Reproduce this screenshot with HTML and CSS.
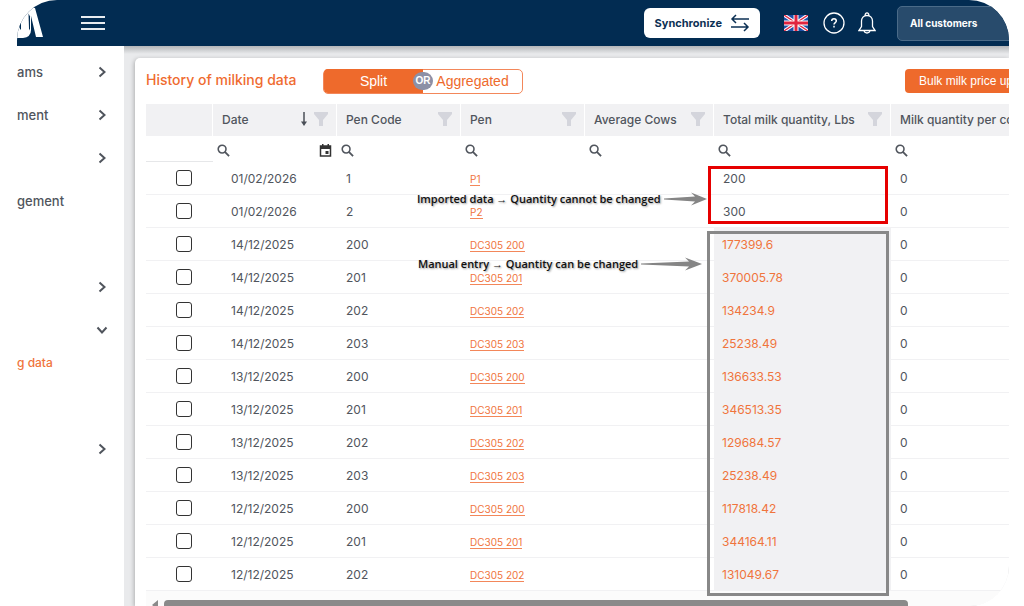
FILE: index.html
```
<!DOCTYPE html>
<html lang="en">
<head>
	<meta charset="utf-8">
	<title>History of milking data</title>
	<link rel="stylesheet" href="styles.css">
</head>
<body>
	<svg class="defs" aria-hidden="true">
		<symbol id="chevron" viewBox="0 0 12 12"><path d="M3.5 1.5 8.500 6l-5 4.500" fill="none" stroke="currentColor" stroke-width="2"/></symbol>
		<symbol id="search" viewBox="0 0 14 14"><circle cx="5.500" cy="5.500" r="4.200" fill="none" stroke="currentColor" stroke-width="1.700"/><path d="M8.500 8.500l4.500 4.500" stroke="currentColor" stroke-width="2"/></symbol>
		<symbol id="filter" viewBox="0 0 14 14"><path d="M0 0h14v2L9 8v6H5V8L0 2z" fill="#d4d5dc"/></symbol>
	</svg>

	<div class="frame">
		<header class="topbar">
			<svg class="logo" viewBox="0 0 28 46" aria-hidden="true">
				<path d="M0 0h14v7l4 1 8 29h-7l-5-21v14q0 7-8 8H0z" fill="#fff"/>
				<path d="M4 18c-3 3-3 9 0 12z" fill="#022c52"/>
				<path d="M11.500 13.500l1.500 3v14l-1-2z" fill="#022c52"/>
			</svg>
			<button class="menu" aria-label="Menu"><span></span><span></span><span></span></button>
			<button class="sync">Synchronize
				<svg width="20" height="18" viewBox="0 0 20 18" fill="none" stroke="#0c3054" stroke-width="1.500"><path d="M19 5H2M6 1 2 5l4 4M1 13h17M14 9l4 4-4 4"/></svg>
			</button>
			<button class="icon flag" aria-label="Language">
				<svg width="24" height="16" viewBox="0 0 24 16">
					<path fill="#1d50a8" d="M0 0h24v16H0z"/>
					<path d="M0 0l24 16M24 0L0 16" stroke="#fff" stroke-width="3.400"/>
					<path d="M0 0l24 16M24 0L0 16" stroke="#e0243f" stroke-width="1.300"/>
					<path d="M12 0v16M0 8h24" stroke="#fff" stroke-width="5"/>
					<path d="M12 0v16M0 8h24" stroke="#e0243f" stroke-width="3"/>
				</svg>
			</button>
			<button class="icon" aria-label="Help">
				<svg width="22" height="22" viewBox="0 0 22 22" fill="none" stroke="#fff" stroke-width="1.300"><circle cx="11" cy="11" r="10"/><path d="M8.700 9c0-3 4.600-3 4.600 0 0 1.600-2.300 1.600-2.300 3.600M11 13.800v1.600" stroke-width="1.500"/></svg>
			</button>
			<button class="icon bell" aria-label="Notifications">
				<svg width="18" height="22" viewBox="0 0 18 22" fill="none" stroke="#fff" stroke-width="1.300"><path d="M1 18.500h16l-2.500-4V9c0-3-2-5.500-5.500-5.500S3.500 6 3.500 9v5.500zM7.300 3.500c-.8-3.500 4.200-3.500 3.400 0M6 18.500c.5 3.300 5.500 3.300 6 0"/></svg>
			</button>
			<button class="customers">All customers</button>
		</header>

		<div class="page">
			<nav class="sidebar">
				<a href="#" class="nav-item"><span>ams</span><svg class="chevron"><use href="#chevron"/></svg></a>
				<a href="#" class="nav-item"><span>ment</span><svg class="chevron"><use href="#chevron"/></svg></a>
				<a href="#" class="nav-item" aria-label="Open section"><svg class="chevron"><use href="#chevron"/></svg></a>
				<a href="#" class="nav-item"><span>gement</span></a>
				<div class="nav-item"></div>
				<a href="#" class="nav-item" aria-label="Open section"><svg class="chevron"><use href="#chevron"/></svg></a>
				<a href="#" class="nav-item" aria-label="Close section"><svg class="chevron open"><use href="#chevron"/></svg></a>
				<div class="nav-sub"><a href="#">g data</a></div>
				<a href="#" class="nav-item" aria-label="Open section"><svg class="chevron"><use href="#chevron"/></svg></a>
			</nav>

			<main class="content">
				<section class="card">
					<div class="card-head">
						<h1>History of milking data</h1>
						<div class="toggle">
							<button class="active">Split</button>
							<span class="or">OR</span>
							<button>Aggregated</button>
						</div>
						<button class="bulk">Bulk milk price up</button>
					</div>

					<div class="grid">
						<table>
							<colgroup>
								<col class="col-check"><col class="col-std"><col class="col-std"><col class="col-std"><col class="col-cows"><col class="col-total"><col class="col-total">
							</colgroup>
							<thead>
								<tr>
									<th></th>
									<th><div class="th">Date <svg class="sort" viewBox="0 0 8 14"><path d="M4 0v11" stroke="#4a4f57" stroke-width="1.500"/><path d="M1 9.500h6L4 14z" fill="#4a4f57"/></svg><svg class="filter"><use href="#filter"/></svg></div></th>
									<th><div class="th">Pen Code <svg class="filter"><use href="#filter"/></svg></div></th>
									<th><div class="th">Pen <svg class="filter"><use href="#filter"/></svg></div></th>
									<th><div class="th">Average Cows <svg class="filter"><use href="#filter"/></svg></div></th>
									<th><div class="th">Total milk quantity, Lbs <svg class="filter"><use href="#filter"/></svg></div></th>
									<th><div class="th">Milk quantity per co</div></th>
								</tr>
								<tr class="filters">
									<td></td>
									<td><label class="find"><svg><use href="#search"/></svg><input type="text" aria-label="Date"><svg class="cal" viewBox="0 0 12 13"><path d="M1 2h10v10H1z" fill="none" stroke="#333" stroke-width="1.500"/><path d="M1 2h10v3H1zM2.500 0h1.500v2H2.500zM8 0h1.500v2H8zM6 7h3v3H6z" fill="#333"/></svg></label></td>
									<td><label class="find"><svg><use href="#search"/></svg><input type="text" aria-label="Pen Code"></label></td>
									<td><label class="find"><svg><use href="#search"/></svg><input type="text" aria-label="Pen"></label></td>
									<td><label class="find"><svg><use href="#search"/></svg><input type="text" aria-label="Average Cows"></label></td>
									<td><label class="find"><svg><use href="#search"/></svg><input type="text" aria-label="Total milk quantity"></label></td>
									<td><label class="find"><svg><use href="#search"/></svg><input type="text" aria-label="Milk quantity per cow"></label></td>
								</tr>
							</thead>
							<tbody>
								<tr><td><input type="checkbox" aria-label="Select row"></td><td>01/02/2026</td><td>1</td><td><a href="#">P1</a></td><td></td><td>200</td><td>0</td></tr>
								<tr><td><input type="checkbox" aria-label="Select row"></td><td>01/02/2026</td><td>2</td><td><a href="#">P2</a></td><td></td><td>300</td><td>0</td></tr>
								<tr><td><input type="checkbox" aria-label="Select row"></td><td>14/12/2025</td><td>200</td><td><a href="#">DC305 200</a></td><td></td><td class="editable">177399.6</td><td>0</td></tr>
								<tr><td><input type="checkbox" aria-label="Select row"></td><td>14/12/2025</td><td>201</td><td><a href="#">DC305 201</a></td><td></td><td class="editable">370005.78</td><td>0</td></tr>
								<tr><td><input type="checkbox" aria-label="Select row"></td><td>14/12/2025</td><td>202</td><td><a href="#">DC305 202</a></td><td></td><td class="editable">134234.9</td><td>0</td></tr>
								<tr><td><input type="checkbox" aria-label="Select row"></td><td>14/12/2025</td><td>203</td><td><a href="#">DC305 203</a></td><td></td><td class="editable">25238.49</td><td>0</td></tr>
								<tr><td><input type="checkbox" aria-label="Select row"></td><td>13/12/2025</td><td>200</td><td><a href="#">DC305 200</a></td><td></td><td class="editable">136633.53</td><td>0</td></tr>
								<tr><td><input type="checkbox" aria-label="Select row"></td><td>13/12/2025</td><td>201</td><td><a href="#">DC305 201</a></td><td></td><td class="editable">346513.35</td><td>0</td></tr>
								<tr><td><input type="checkbox" aria-label="Select row"></td><td>13/12/2025</td><td>202</td><td><a href="#">DC305 202</a></td><td></td><td class="editable">129684.57</td><td>0</td></tr>
								<tr><td><input type="checkbox" aria-label="Select row"></td><td>13/12/2025</td><td>203</td><td><a href="#">DC305 203</a></td><td></td><td class="editable">25238.49</td><td>0</td></tr>
								<tr><td><input type="checkbox" aria-label="Select row"></td><td>12/12/2025</td><td>200</td><td><a href="#">DC305 200</a></td><td></td><td class="editable">117818.42</td><td>0</td></tr>
								<tr><td><input type="checkbox" aria-label="Select row"></td><td>12/12/2025</td><td>201</td><td><a href="#">DC305 201</a></td><td></td><td class="editable">344164.11</td><td>0</td></tr>
								<tr><td><input type="checkbox" aria-label="Select row"></td><td>12/12/2025</td><td>202</td><td><a href="#">DC305 202</a></td><td></td><td class="editable">131049.67</td><td>0</td></tr>
							</tbody>
						</table>
						<div class="scrollbar">
							<svg width="6" height="10" viewBox="0 0 6 10"><path d="M6 0v10L0 5z" fill="#8a8a8a"/></svg>
							<div class="thumb"></div>
						</div>

						<!-- notes over the table -->
						<div class="box locked"></div>
						<div class="box manual"></div>
						<div class="note note-locked">Imported data → Quantity cannot be changed <svg width="43" height="14" viewBox="0 0 43 14"><path d="M0 6.500 31 4.500l-4-4L43 7l-16 6.500 4-4L0 7.500z" fill="#858585"/></svg></div>
						<div class="note note-manual">Manual entry → Quantity can be changed <svg width="61" height="14" viewBox="0 0 61 14"><path d="M0 6.500 48 4.500l-4-4L61 7l-17 6.500 4-4L0 7.500z" fill="#858585"/></svg></div>
					</div>
				</section>
			</main>
		</div>
	</div>
</body>
</html>
```

FILE: styles.css
```
* { box-sizing: border-box; }
body {
	margin: 0;
	background: #fff;
	color: #50555d;
	font-family: Inter, sans-serif;
	font-size: 12px;
}
a { text-decoration: none; color: inherit; }
button { font-family: inherit; cursor: pointer; }
.defs { display: none; }

.frame {
	display: flex;
	flex-direction: column;
	height: 100vh;
	margin: 0 15px 0 17px;
	border-radius: 40px;
	border-bottom-left-radius: 0;
	overflow: hidden;
}

/* top bar */
.topbar {
	display: flex;
	align-items: center;
	flex: none;
	height: 46px;
	background: #022c52;
	z-index: 1;
}
.logo { width: 28px; height: 46px; }
.menu {
	display: flex;
	flex-direction: column;
	justify-content: space-between;
	width: 24px;
	height: 14px;
	margin: 0 auto 0 36px;
	padding: 0;
	border: 0;
	background: none;
}
.menu span { height: 2px; background: #e8ecf0; }
.sync {
	display: flex;
	align-items: center;
	gap: 8px;
	height: 30px;
	padding: 0 10px 0 11px;
	border: 0;
	border-radius: 6px;
	background: #fff;
	color: #0c3054;
	font-size: 11px;
	font-weight: 700;
}
.icon {
	display: flex;
	margin-left: 15px;
	padding: 0;
	border: 0;
	background: none;
}
.flag { margin-left: 24px; }
.bell { margin-left: 13px; }
.customers {
	width: 124px;
	height: 35px;
	margin: 0 -12px 0 21px;
	padding: 0 12px;
	border: 1px solid #4b6b88;
	border-radius: 5px;
	background: #284b6c;
	color: #fff;
	font-size: 10px;
	font-weight: 700;
	text-align: left;
}

.page { display: flex; flex: 1; min-height: 0; }

/* sidebar */
.sidebar {
	flex: none;
	width: 107px;
	padding-top: 4px;
	overflow: hidden;
	font-size: 13px;
	font-weight: 500;
}
.nav-item {
	display: flex;
	align-items: center;
	height: 43px;
	padding-right: 16px;
}
.chevron { width: 12px; height: 12px; margin-left: auto; }
.open { transform: rotate(90deg); }
.nav-sub {
	height: 76px;
	padding-top: 2px;
	color: #f0743c;
	font-size: 12px;
	line-height: 20px;
}

/* card */
.content {
	flex: 1;
	min-width: 0;
	padding: 12px 0 0 11px;
	background: linear-gradient(#b4b6b9, #e9eaec 8px);
}
.card {
	height: 100%;
	padding-left: 11px;
	border-radius: 5px 0 0 0;
	background: #fff;
	box-shadow: -1px 1px 4px rgba(0, 0, 0, 0.25);
	overflow: hidden;
}
.card-head { display: flex; align-items: center; height: 46px; }
h1 {
	flex: none;
	width: 177px;
	margin: 0;
	padding-bottom: 3px;
	color: #ef6b30;
	font-size: 14px;
	font-weight: 500;
	white-space: nowrap;
}
.toggle {
	display: flex;
	align-items: center;
	height: 25px;
	border: 1px solid #f3875a;
	border-radius: 5px;
	background: #fff;
}
.toggle button {
	width: 99px;
	height: 24px;
	padding: 0;
	border: 0;
	border-radius: 4px;
	background: none;
	color: #ee6a2c;
	font-family: "Liberation Sans", sans-serif;
	font-size: 14px;
}
.toggle .active {
	border-radius: 4px 0 0 4px;
	background: #ee6a2c;
	color: #fff;
}
.or {
	width: 20px;
	height: 18px;
	margin: 0 -10px;
	border-radius: 10px;
	background: #8c90a6;
	color: #fff;
	font-family: "Liberation Sans", sans-serif;
	font-size: 10px;
	font-weight: 700;
	line-height: 18px;
	text-align: center;
	z-index: 1;
}
.bulk {
	height: 24px;
	margin: 0 -13px 0 auto;
	padding: 0 9px 0 14px;
	border: 0;
	border-radius: 4px;
	background: #ee6a2c;
	color: #fff;
	font-family: "Liberation Sans", sans-serif;
	font-size: 12px;
	white-space: nowrap;
}

/* table */
.grid { position: relative; overflow: hidden; }
table {
	width: 922px;
	border-collapse: separate;
	border-spacing: 0;
	table-layout: fixed;
}
.col-check { width: 67px; }
.col-std { width: 124px; }
.col-cows { width: 129px; }
.col-total { width: 177px; }
th {
	height: 32px;
	padding: 0 8px 2px 9px;
	border-right: 1px solid #fff;
	background: #f1f1f3;
	font-weight: 500;
	text-align: left;
	white-space: nowrap;
}
.th { display: flex; align-items: center; }
.filter { width: 14px; height: 14px; margin-left: auto; }
.sort { width: 8px; height: 14px; margin-left: auto; }
.sort + .filter { margin-left: 6px; }
.filters td {
	height: 26px;
	padding: 3px 2px 0;
	border-bottom: 1px solid #e6e7e9;
}
.filters td + td { border-color: #fff; }
.find { display: flex; align-items: center; padding: 0 3px 0 2px; }
.find svg { flex: none; width: 13px; height: 13px; }
.find input {
	flex: 1;
	min-width: 0;
	height: 20px;
	border: 0;
	outline: 0;
	background: none;
}
tbody td {
	height: 33px;
	padding: 0 9px;
	border-bottom: 1px solid #f1f1f3;
}
tbody td:first-child { padding-left: 30px; }
tbody td:nth-child(2) { padding-left: 18px; }
tbody a {
	border-bottom: 1px solid #f3875a;
	color: #f0743c;
	font-size: 10px;
}
tbody input {
	display: block;
	appearance: none;
	width: 16px;
	height: 16px;
	margin: 0;
	border: 1px solid #333;
	border-radius: 3px;
}
tbody .editable {
	padding-left: 8px;
	background: #f1f1f3;
	color: #f0743c;
}

.scrollbar {
	display: flex;
	gap: 6px;
	height: 24px;
	padding: 9px 0 0 6px;
	background: #fbfbfb;
}
.thumb {
	width: 744px;
	height: 10px;
	border-radius: 4px;
	background: #8a8a8a;
}

/* notes */
.box { position: absolute; border: 3px solid #888; }
.locked {
	top: 62px;
	left: 562px;
	width: 180px;
	height: 58px;
	border-color: #e60000;
}
.manual {
	top: 127px;
	left: 561px;
	width: 182px;
	height: 365px;
}
.note {
	display: flex;
	position: absolute;
	align-items: center;
	gap: 3px;
	color: #111;
	font-family: "Open Sans", sans-serif;
	font-size: 11px;
	font-weight: 600;
	line-height: 16px;
	text-shadow: 1px 1px 2px #999;
	white-space: nowrap;
}
.note-locked { top: 87px; left: 271px; }
.note-manual { top: 152px; left: 272px; }
```
